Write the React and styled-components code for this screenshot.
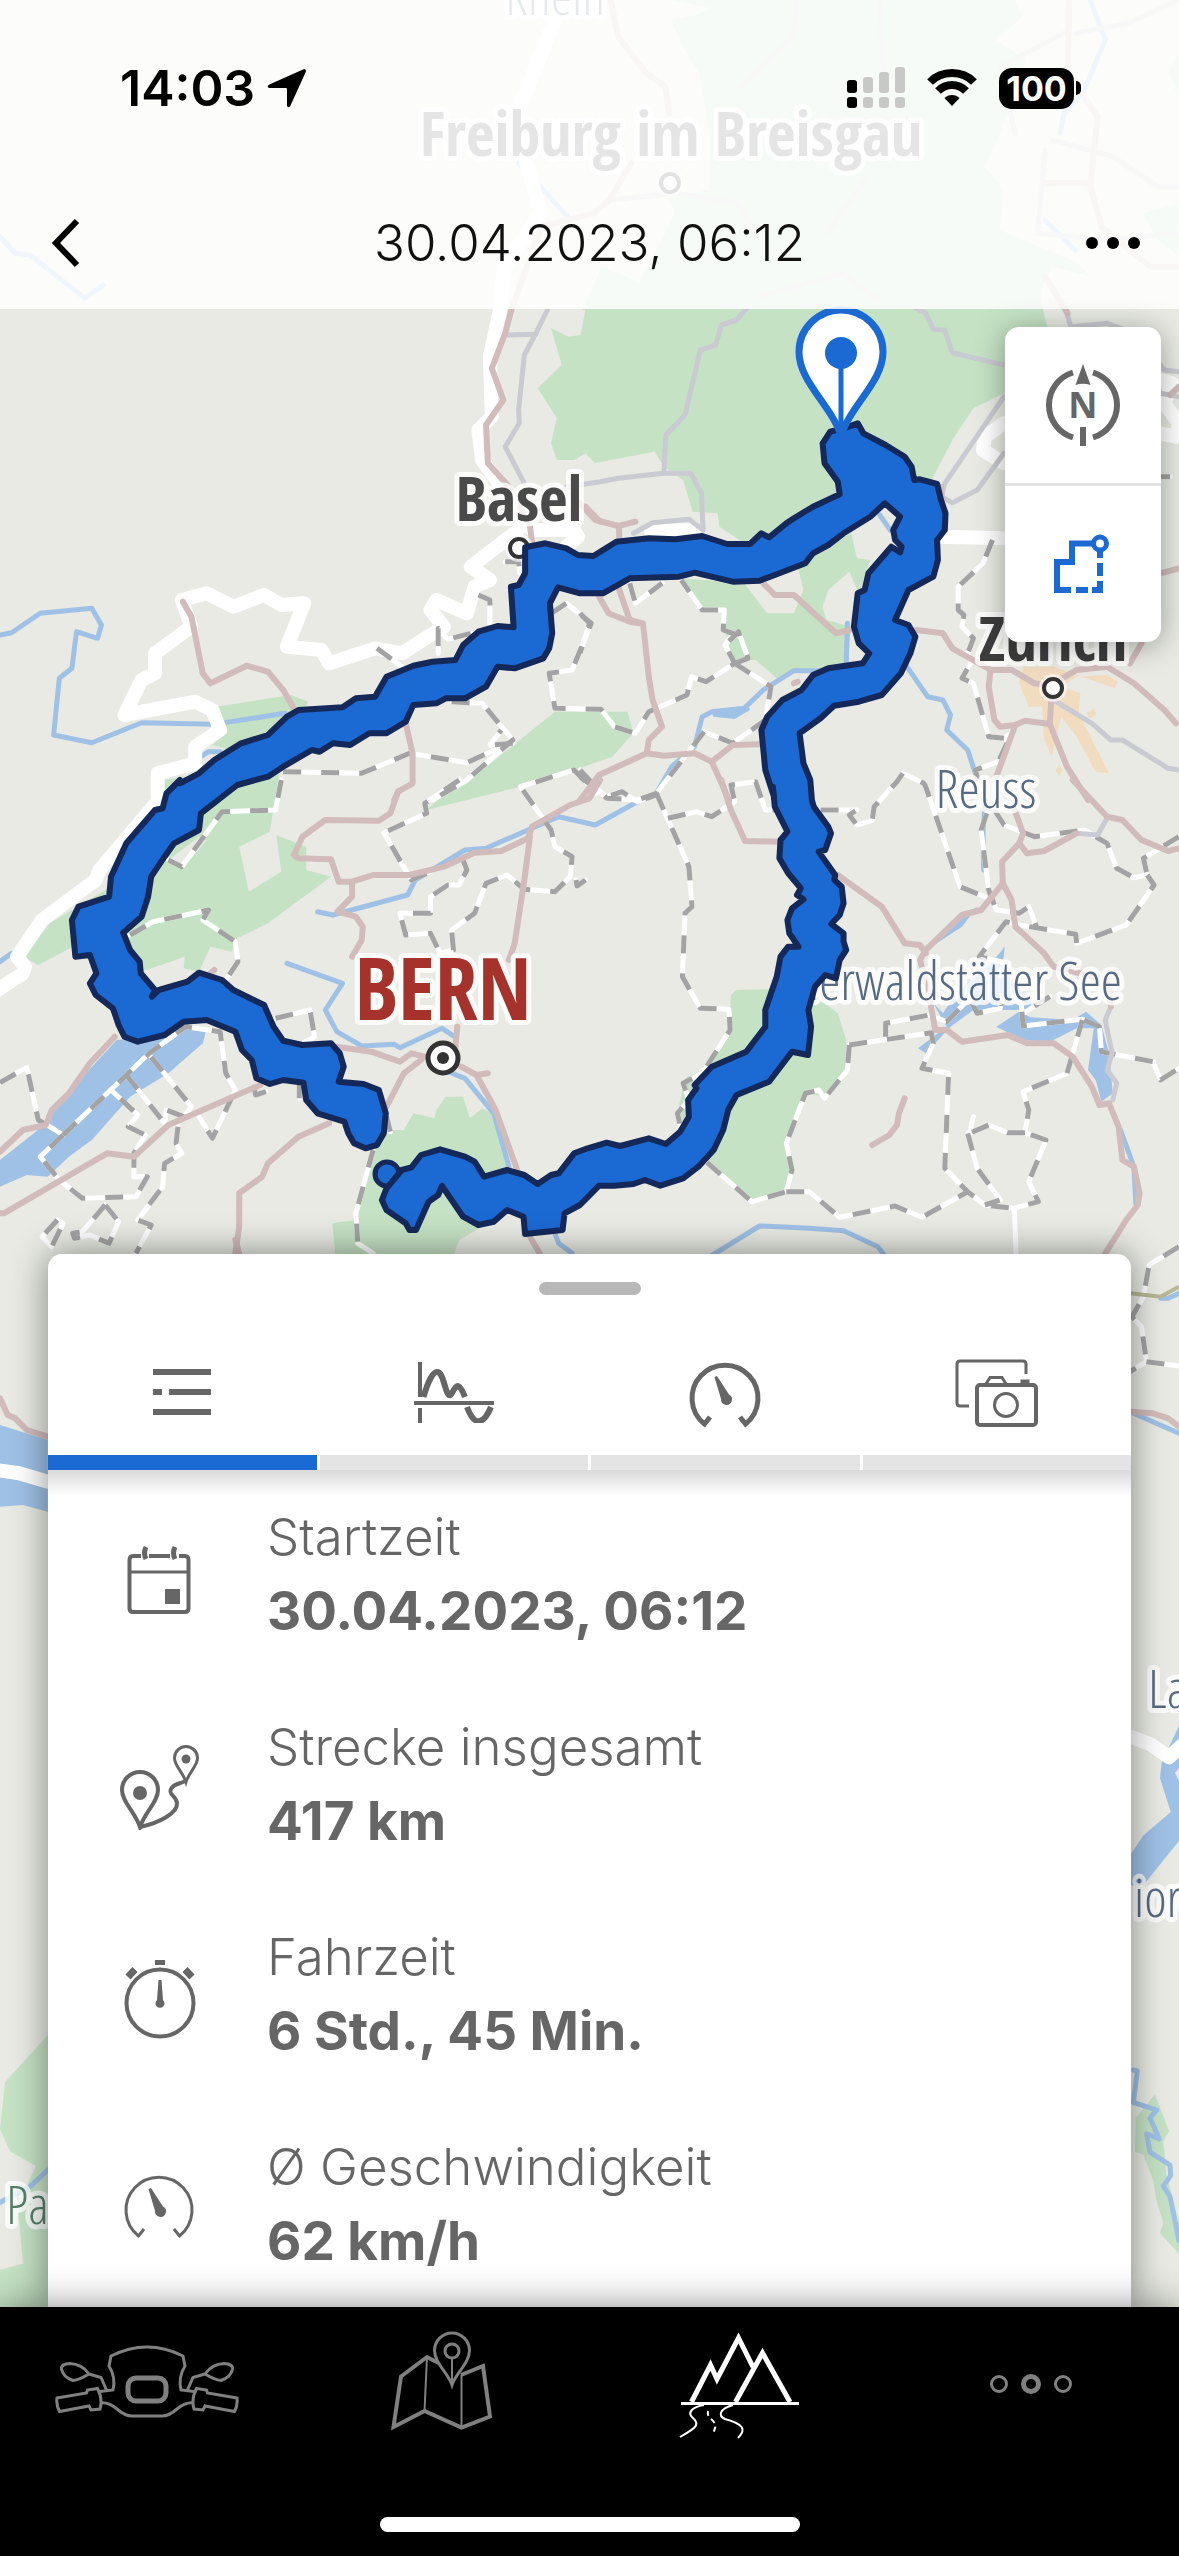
import React from "react";
import styled, { createGlobalStyle } from "styled-components";

const GlobalStyle = createGlobalStyle`
  *, *::before, *::after { box-sizing: border-box; }
  body { margin: 0; background: #e8eae3; font-family: Inter, "Liberation Sans", sans-serif; }
  button { font: inherit; color: inherit; background: none; border: 0; padding: 0; cursor: pointer; }
`;

const blue = "#1b69d3";
const navy = "#14295a";
const grey = "#666666";

/* ---------- map data ---------- */

/* Each sheet of the map has its own origin and its own units per pixel. */
const sheets = {
  A: [0, 0, 1.33, 3],
  B: [0, 300, 2.613, 3],
  C: [580, 300, 2.618, 3],
  D: [0, 780, 2.613, 3],
  E: [580, 780, 2.618, 3],
  F: [0, 1240, 2.613, 3],
  G: [580, 1240, 2.618, 3],
  H: [0, 1680, 1.96, 2.45],
  K: [1000, 1480, 3, 1.912],
};

function project(text) {
  let sheet = sheets.A;
  const out = [];
  text.trim().split(/\s+/).forEach((token) => {
    if (sheets[token]) {
      sheet = sheets[token];
      return;
    }
    const [x, y] = token.split(",").map(Number);
    out.push(
      (sheet[0] + x / sheet[2]).toFixed(1) + "," + (sheet[1] + y / sheet[3]).toFixed(1)
    );
  });
  return out.join(" ");
}

const forests = [
  "A 893,0 945,25 925,45 893,60 905,130 930,220 945,420 943,570 890,590 897,640 880,720 850,845 800,800 775,930 B 1530,30 1517,105 1485,110 1440,85 1468,195 1405,265 1455,355 1440,430 1455,480 1500,480 1530,460 1555,490 C 35,490 195,455 220,500 270,540 295,635 360,640 365,680 430,730 700,640 860,560 920,540 980,410 1030,325 1110,280 1150,200 1240,150 1205,0 A 1385,870 1400,800 1450,830 1435,790 1330,690 1335,570 1310,500 1330,400 1365,180 1325,120 1360,50 1350,0",
  "A 1568,150 1555,220 1568,300",
  "A 1568,610 1520,640 1540,720 1568,770",
  "C 265,835 430,850 490,940 560,940 585,870 570,800 710,700 725,775 760,780 730,880 705,815 650,870 635,920 645,960 710,980 700,1110 580,1110 520,1140 460,1080 400,1080 380,990 375,930 320,930",
  "B 565,1220 760,1185 805,1205 790,1240 600,1350 555,1335 590,1290",
  "D 430,0 735,-60 705,155 625,200 650,335 735,275 722,165 800,200 800,270 865,290 700,430 620,475 605,515 550,500 520,575 480,565 483,530 370,575 300,450 190,500 100,555 60,530 130,430 290,320",
  "B 1450,1235 1640,1235 1655,1300 1600,1370 1500,1410 1360,1460 D 1115,90 B 1200,1440 1250,1420",
  "D 975,1100 1025,1050 1055,1050 1080,1000 1135,1015 1140,990 1165,950 1210,950 1228,1015 1260,985 1285,1000 1325,1160 1260,1340 1200,1380 1180,1440 878,1440 868,1330 930,1320",
  "E 395,645 410,630 490,628 560,640 640,670 675,700 697,780 700,870 640,950 590,940 560,1050 540,1100 555,1170 540,1230 450,1265 330,1145 260,1040 255,1000 275,895 320,870 390,750",
  "H 94,870 10,985 0,1100 20,1155 70,1190 35,1290 45,1430 0,1445 0,1600 94,1600",
  "K 407,1220 465,1175 507,1245 490,1265 500,1330 537,1420 537,1480 480,1440 490,1420 470,1380 460,1340 430,1290 405,1285",
];

const clearings = ["D 440,240 520,170 540,180 480,262"];

const towns = [
  "C 1160,1100 1240,1100 1400,1165 1408,1145 1380,1125 1300,1130 1260,1160 1310,1180 1305,1240 1385,1420 1350,1415 1300,1310 1260,1250 1235,1370 1215,1320 1210,1220 1175,1220 1150,1150",
  "C 1325,1240 1345,1225 1352,1245 1335,1255",
  "C 1245,1410 1255,1395 1262,1410 1255,1430",
];

const lakes = [
  "D 305,780 400,770 500,735 540,745 530,790 440,880 340,950 240,1080 180,1130 125,1190 70,1185 0,1220 0,1140 110,1040 200,910",
  "E 925,670 950,700 985,640 1080,545 1112,500 1105,570 1180,660 1180,690 1030,690 970,740 905,820 885,805 960,740",
  "E 1090,740 1150,695 1180,712 1290,720 1325,695 1365,735 1385,820 1395,940 1365,965 1350,900 1330,870 1345,745 1300,745 1230,785 1160,780",
  "E 1040,380 1000,440 920,500 985,420",
  "C 340,1230 400,1232 440,1215 445,1230 405,1257 350,1250",
  "F 0,555 125,600 125,815 60,795 0,800",
  "K 537,470 485,540 480,570 512,635 430,680 393,715 393,775 430,775 537,690 537,575 525,560 537,550",
];

const rivers = [
  "B 0,1005 30,998 105,940 240,925 265,975 255,1015 200,995 188,1105 155,1135 140,1305 240,1328 370,1268 560,1273 745,1240",
  "B 525,1370 545,1355 575,1355",
  "D 0,545 30,520",
  "D 830,395 870,405 1065,345 1085,300 1215,210 1270,205 1420,130 1460,110 1555,135 E 40,135 150,65 200,40 C 240,1400 300,1340 320,1250 345,1235 430,1225 480,1170 560,1112 640,1112",
  "D 750,550 895,610 850,690 880,755 945,798 1030,793 1045,803 1155,745 1185,768",
  "D 1160,870 1215,895 1290,1000 1330,1160",
  "D 1450,1360 1460,1390 1495,1420",
  "C 700,970 697,1090",
  "C 785,645 812,690",
  "C 850,1090 910,1190 950,1200 970,1245 960,1290 1015,1350 1035,1420",
  "E 1062,60 1055,150 1057,270",
  "E 340,1430 470,1338 600,1345 690,1352 780,1400 800,1430",
  "E 1415,1050 1450,1160 1455,1270",
  "G 1440,515 1568,580",
  "G 1520,175 1540,175 1568,160",
  "K 400,1128 412,1130 400,1190 470,1205 450,1220 478,1260 440,1250 450,1285 510,1310 512,1330 490,1350 510,1370 537,1455",
  "H 0,1280 60,1240 94,1200",
  "A 0,710 20,760 40,765 113,895 137,855",
  "A 690,490 755,650",
  "A 1450,0 1470,120 1440,280 1415,340 1410,400",
  "A 1390,660 1430,750",
];

const motorways = [
  "A 812,0 822,110 860,220 885,260 890,340",
  "A 840,490 810,600 790,640 720,680 680,930 B 1320,100 1285,205 1315,300 1270,375 1275,490 1330,560 1385,680 1390,725",
  "A 1422,0 1420,220 1460,350 1450,560 1465,680 1530,800 1568,800",
  "A 1390,550 1450,548",
  "A 1390,830 1420,940",
  "B 1530,620 1568,665",
  "C 0,610 40,660 100,678 145,665",
  "C 102,678 103,715",
  "C 100,860 130,960 165,970 180,1130 190,1200 215,1280 180,1320 175,1360 50,1425 0,1500",
  "C 50,890 75,940 130,965 155,970",
  "C 175,1360 220,1367 300,1360 345,1385 390,1500",
  "C 345,1385 400,1335 470,1333",
  "E 370,0 395,90 432,183 520,185",
  "C 480,850 510,885 560,885 670,1000 705,990",
  "C 880,990 950,1000 975,1045 1075,1110 1130,1110 1190,1150 1215,1155",
  "C 1075,1110 1070,1160 1085,1260 1100,1280 1140,1275 1165,1262 1230,1272 1235,1180",
  "C 1230,1272 1275,1400 1330,1500",
  "C 1140,1275 1090,1430",
  "E 1135,80 1160,160 1150,190 1105,245 1107,310 1050,390 1000,405 905,510 890,540 910,620 930,750 960,750 1000,785 1120,765 1170,790 1240,790 1290,830 1340,920 1360,975 1385,970 1410,1040 1420,1140 1450,1160 1465,1240 1460,1275 1430,1320 1370,1430",
  "E 1107,310 1130,360 1140,440 1215,520 1240,560 1380,600 1390,680",
  "E 1150,190 1170,220 1215,213 1300,160",
  "E 1290,0 1380,110 1420,120 1470,180 1540,213 1568,205",
  "E 675,285 790,380 850,490 890,495 905,520",
  "E 850,955 835,1000 830,1035 810,1065 765,1095",
  "C 1440,1090 1470,1030",
  "C 1240,1150 1300,1110 1380,1100 1450,1150 1530,1230 1560,1270",
  "C 1520,820 1568,805",
  "C 945,560 948,600",
  "C 560,1150 570,1145",
  "C 1545,285 1568,260",
  "B 478,905 500,950 530,1120 550,1150 645,1097 700,1115 740,1170 770,1230",
  "B 1060,1270 1078,1360 1078,1450 1040,1475 1030,1500",
  "D 1040,35 1020,100 990,122 850,120 790,170 768,225 780,235 865,238 885,305 920,305 975,285 1070,285 1160,260 1240,218 1310,213 1380,175 1390,140 1490,75 1540,55 1568,0",
  "D 920,305 920,350 882,395 930,410 948,440 945,480 920,530",
  "D 1385,170 1370,300 1345,490 1330,540",
  "D 1195,740 1190,800",
  "D 880,800 970,815 1045,845 1075,820 1110,830",
  "D 1100,840 1055,880 1010,980",
  "D 1205,860 1245,885 1295,990 1350,1165 1385,1370 1410,1420",
  "D 1245,885 1275,880",
  "D 300,770 235,850 180,940 135,990 120,1035 60,1050 0,1115",
  "D 680,915 440,1035 350,1130 280,1120 10,1300 0,1300",
  "D 860,1030 780,1070 700,1150 685,1190 625,1240 625,1340 615,1420",
  "D 550,580 560,570",
  "F 615,0 625,40",
  "F 0,475 20,525 40,535 70,570 125,590",
  "G 1440,515 1500,520 1540,535 1568,560",
];

const mainRoads = [
  "B 1430,30 1400,100 1370,165 1355,330 1357,370 1320,440 1370,550",
  "B 1325,105 1400,103",
  "B 1480,560 1568,545 C 100,535 220,520 290,520 318,580 322,690",
  "C 220,510 225,405 275,345 315,150 355,135 370,75 410,60 440,20",
  "C 140,700 190,668 285,658 322,690",
  "C 880,25 905,40 925,88 955,90 975,158 1110,195",
  "C 1110,290 955,550 945,590 975,608 1040,570 1110,460",
  "C 1240,1200 1340,1270 1390,1320 1420,1320 1540,1405 1568,1410",
  "E 1300,160 1355,165 1380,115",
  "E 1390,680 1375,720 1393,820 1380,870 1405,910 1395,960",
  "C 1270,20 1285,80 1380,70 1450,100 1530,210 1568,215",
  "C 1520,280 1568,290",
  "A 1060,0 1055,110 985,260",
  "A 1170,0 1175,220",
  "A 1150,540 1100,700",
  "A 810,600 900,580 980,610 1010,720",
  "A 1010,890 1120,820 1170,900",
  "A 1430,100 1500,70 1568,0",
  "A 1415,100 1330,200 1350,400",
  "A 1400,420 1480,470 1540,560 1568,560",
  "A 1390,450 1380,700 1470,720 1568,700",
];

const countryBorders = [
  "A 738,60 690,330 700,490 720,640 670,800 665,930 B 1280,170 1285,350 1250,390 1260,480 1310,560 1390,680",
  "B 1390,690 1500,690 1510,710 1480,740",
  "B 1355,690 1230,800 1280,840 1240,860 1220,940 1140,900 1125,930 1160,980 1050,1060 980,1045 860,1090 840,1050 750,1040 795,910 735,915 690,885 610,920 540,880 475,900 500,980 405,1060 405,1120 370,1140 325,1245 510,1205 555,1230 575,1290 510,1340 510,1390 412,1420 412,1500 D 415,60 260,270 250,300 110,420 45,530 65,560 60,580 -20,640",
  "C 940,710 1110,715",
  "C 185,693 300,690",
  "C 1110,370 1060,410 1055,450 1110,490",
  "C 1520,240 1550,250 1530,310 1568,370 1560,410 1520,400",
  "F -10,690 50,700 125,725",
  "K 380,488 450,505 507,530 545,508",
];

const cantonBorders = [
  "B 985,1045 1050,1100",
  "B 1250,885 1280,900 1280,970",
  "B 1230,1000 1170,1018 1145,985 1145,1060",
  "B 1320,785 1355,785 1358,820",
  "B 1440,940 1480,910 1545,970 1495,1110 1435,1120 1450,1225 1568,1228 C 55,1228 90,1280 145,1300 180,1235 280,1185 292,1130 330,1145 405,1090 380,1035 400,1000 375,990 378,930 320,930 265,840",
  "C 0,940 25,970 0,1060",
  "C 405,1090 440,1075 415,995 380,1035",
  "C 405,1090 500,1160 485,1260 400,1330 325,1295",
  "C 325,1295 200,1480 150,1500 70,1495 0,1410",
  "C 130,850 145,910 215,850",
  "B 1180,1205 1260,1210 1340,1320 1220,1440 1130,1500",
  "B 1340,1330 1280,1335 1310,1290",
  "B 740,1415 945,1420 1070,1360 1220,1388 1320,1335",
  "D 735,0 720,90 580,95 475,260 440,240",
  "D 340,465 400,425 545,390 530,420 615,485 622,545 590,600",
  "D 1200,0 1110,70 1115,100 1003,158 1075,300 1125,275",
  "D 1210,240 1220,270 1200,315 1170,315 1125,350 1125,400 1045,400 1060,465 1125,460 1150,520 1185,510 1180,450 1240,400 1270,310 1325,285 1370,328 1450,335 1490,290 1495,230 1450,200 1440,150 1360,20 1500,-30 1560,40",
  "D 1505,300 1508,318 1530,300",
  "E 0,-10 70,50 110,35 150,65 200,45",
  "E 200,40 285,260 293,380 275,400 268,590 315,685 390,688 393,750 320,880 270,910 285,960 255,1000 265,1050",
  "E 230,115 305,95 345,110 405,65 395,15 460,5 485,90 530,90",
  "E 630,90 725,90 705,105 725,135 765,122 770,80 830,5 C 845,1420 900,1450 E 905,20 995,320 1060,350",
  "E 1085,90 1110,135 1190,170 1320,150 1380,190 1405,265 1450,293 1485,285 1475,235 1568,170",
  "E 1485,285 1503,315 1430,435 1300,490 1298,463 1150,435 1115,425 1045,530 1120,550",
  "E 1065,100 1050,150 1070,330 1090,390 1150,400 1175,380 1195,440",
  "E 705,795 920,758 925,790 895,865 965,880 955,1165 1015,1235 1060,1275 1135,1285 1200,1265 1175,1205 1220,1080 1165,1058 1175,990 1160,935 1275,880 1315,720",
  "E 1165,1058 1120,1058 1070,1035 1020,1060 1030,1010",
  "E 1015,1060 1040,1165 1100,1260 1060,1275",
  "E 705,795 700,870 640,955 625,930 590,940 540,1090 555,1170 540,1235 450,1265 330,1145",
  "E 540,1235 600,1235 680,1312 825,1278 895,1312 1015,1235",
  "E 800,770 800,730 915,705 960,725 1020,655 1040,700 1100,685 1105,650 1155,670 1160,738 1315,718 1360,740 1365,815 1500,845 1520,900 1568,865",
  "E 1230,650 1160,700",
  "C 1080,720 1055,790 990,860 990,930 1005,945 1000,980 1030,1015 1015,1060 1025,1085 1000,1135 1030,1150 1070,1310 1110,1315 1130,1300 1095,1385 1035,1410 1045,1450",
  "C 1520,530 1545,530",
  "D 0,908 70,862 100,1020 130,1040 165,1065 390,820 485,740 575,755 590,880 615,930 555,1075 520,1010",
  "D 165,1065 105,1130 155,1200 215,1255 355,1250 385,1190 350,1190 350,1120 380,1065 335,1040 360,1005 290,930",
  "D 330,885 430,1030 435,990 480,1010 500,980 390,825",
  "D 465,1040 460,1090 475,1120 430,1150 425,1220 360,1320 395,1335 355,1420",
  "D 275,1275 310,1325 285,1390 235,1365 195,1375 190,1360 215,1355 275,1275",
  "D 150,1320 110,1370 135,1400 165,1330 150,1320",
  "D 720,715 810,690 822,770 790,790",
  "D 665,930 668,945 695,935",
  "D 782,915 782,955",
  "D 1010,1010 1020,1055",
  "D 975,1110 930,1300 935,1390 975,1420",
  "G 1568,20 1490,75 1475,170 1455,210 1445,230 1470,260 1483,365 1440,395",
  "G 1483,365 1568,378",
];

const track =
  "C 727,370 742,400 800,435 850,470 868,500 875,540 890,538 935,552 945,600 957,640 955,690 935,720 937,780 925,830 860,870 825,960 860,975 878,1010 865,1060 840,1120 790,1185 730,1205 665,1217 630,1255 575,1300 585,1390 603,1440 607,1500 " +
  "E 612,80 650,140 657,160 642,210 625,215 668,285 666,300 685,320 690,370 680,405 658,432 690,460 690,485 697,510 680,540 670,595 642,585 615,620 598,690 605,740 597,825 555,815 495,905 410,945 388,990 375,1050 350,1110 310,1160 270,1195 210,1217 170,1200 140,1212 90,1217 50,1217 0,1275 " +
  "D 1475,1300 1470,1350 1372,1362 1368,1310 1325,1290 1290,1325 1250,1335 1210,1310 1155,1218 1145,1245 1120,1265 1087,1350 1070,1350 1060,1330 1010,1290 998,1260 1010,1225 1050,1170 1075,1162 1100,1125 1150,1108 1215,1130 1240,1145 1265,1190 1325,1170 1370,1185 1405,1212 1440,1185 1460,1180 1500,1120 " +
  "E 20,1105 70,1088 105,1098 180,1075 225,1092 262,1055 285,1010 283,960 305,925 300,915 345,860 435,815 485,740 485,690 500,640 515,590 525,530 545,500 572,500 548,460 543,420 555,385 585,358 568,345 578,325 545,280 522,235 525,180 543,155 510,80 505,20 " +
  "C 508,1490 485,1410 475,1290 490,1250 530,1200 580,1170 610,1125 650,1105 740,1090 757,1060 730,1030 717,980 727,880 745,870 755,820 815,740 838,757 842,740 825,720 820,690 838,650 798,610 760,650 690,700 650,735 610,760 590,790 510,825 470,842 400,845 300,818 260,830 130,835 60,880 0,880 " +
  "B 1458,862 1437,910 1443,1000 1435,1045 1420,1075 1345,1105 1300,1100 1270,1160 1215,1195 1165,1195 1140,1210 1080,1215 1060,1265 1010,1300 965,1300 915,1335 870,1330 835,1355 815,1350 740,1400 700,1430 620,1455 570,1500 " +
  "D 525,100 520,150 455,190 430,230 395,290 387,350 370,410 322,458 340,510 365,545 368,580 405,630 397,650 415,630 490,605 520,578 580,600 610,630 690,675 715,740 740,782 790,795 865,790 888,820 898,860 885,905 950,912 990,930 1008,1000 1003,1060 985,1095 955,1105 925,1090 910,1060 900,1025 830,1000 800,960 793,908 740,900 705,912 670,895 658,840 632,810 615,755 540,720 480,725 430,765 360,785 325,770 310,735 295,685 250,645 235,610 252,580 235,525 197,530 188,420 205,380 285,350 290,290 330,190 405,90 425,85 435,40 470,0 " +
  "B 470,1450 520,1420 560,1380 630,1330 700,1305 750,1250 780,1230 895,1222 930,1195 980,1190 1010,1130 1080,1097 1130,1085 1190,1080 1210,1035 1250,995 1300,978 1342,982 1335,860 1355,855 1372,820 1372,742 1425,730 1480,745 1510,765 1550,768 " +
  "C 35,768 95,725 180,715 250,718 320,708 385,732 445,732 475,700 495,712 540,670 560,655 610,620 680,583 675,545 640,490 635,430 655,395 690,385";

const MapSvg = styled.svg`
  position: absolute;
  inset: 0;
  width: 100%;
  height: 100%;
  z-index: 0;
`;

const Label = styled.text`
  font-family: ${(p) => (p.$bold ? '"Open Sans Condensed", ' : '"Open Sans Condensed Light", "Noto Sans Condensed", ')} "Open Sans", sans-serif;
  font-size: ${(p) => p.$size}px;
  font-weight: ${(p) => (p.$bold ? 700 : 400)};
  fill: ${(p) => p.$color};
  stroke: rgba(255, 255, 255, 0.8);
  stroke-width: 10px;
  stroke-linejoin: round;
  paint-order: stroke;
`;

function Lines({ items, color, width, dash }) {
  return (
    <g fill="none" stroke={color} strokeWidth={width} strokeDasharray={dash} strokeLinejoin="round" strokeLinecap={dash ? "butt" : "round"}>
      {items.map((line) => (
        <polyline key={line} points={project(line)} />
      ))}
    </g>
  );
}

function Areas({ items, color }) {
  return (
    <g fill={color}>
      {items.map((area) => (
        <polygon key={area} points={project(area)} />
      ))}
    </g>
  );
}

function Town({ x, y }) {
  return (
    <g>
      <circle cx={x} cy={y} r="14" fill="#fff" opacity="0.6" />
      <circle cx={x} cy={y} r="9" fill="#fff" stroke="#333" strokeWidth="4" />
    </g>
  );
}

function TripMap() {
  return (
    <MapSvg viewBox="0 0 1179 2556" preserveAspectRatio="xMidYMin slice" role="img" aria-label="Karte">
      <rect width="1179" height="2556" fill="#e8eae3" />
      <Areas items={forests} color="#c5e2c5" />
      <Areas items={clearings} color="#e8eae3" />
      <Areas items={towns} color="#f1dcc0" />
      <Areas items={lakes} color="#9fc1e6" />
      <Lines items={rivers} color="#9fc1e6" width="5" />
      <Lines items={countryBorders} color="#ffffff" width="14" />
      <polyline points={project("E 1137,1285 1142,1430")} fill="none" stroke="#fff" strokeWidth="5" />
      <Lines items={cantonBorders} color="#ffffff" width="5" />
      <Lines items={cantonBorders} color="#a3a3a3" width="5" dash="18 20" />
      <Lines items={mainRoads} color="#cacad2" width="5" />
      <Lines items={motorways} color="#d2bbbb" width="6" />
      <polyline points={project("G 1440,160 1520,170 1568,140")} fill="none" stroke="#b8b896" strokeWidth="4" />

      <Label x="555" y="15" textAnchor="middle" $size={54} $color="#566a83">Rhein</Label>
      <Label x="671" y="156" textAnchor="middle" $size={62} $bold $color="#4a4a4a">Freiburg im Breisgau</Label>
      <Town x={670} y={183} />
      <Label x="519" y="521" textAnchor="middle" $size={62} $bold $color="#4a4a4a">Basel</Label>
      <Town x={519} y={548} />
      <Label x="1053" y="661" textAnchor="middle" $size={62} $bold $color="#3d3d3d">Zürich</Label>
      <Town x={1053} y={688} />
      <Label x="986" y="808" textAnchor="middle" $size={54} $color="#566a83">Reuss</Label>
      <Label x="1122" y="1000" textAnchor="end" $size={54} $color="#566a83">Vierwaldstätter See</Label>
      <Label x="443" y="1020" textAnchor="middle" $size={86} $bold $color="#a6332b">BERN</Label>
      <circle cx="443" cy="1058" r="15" fill="#fff" stroke="#333" strokeWidth="5" />
      <circle cx="443" cy="1058" r="6" fill="#333" />
      <Label x="1148" y="1708" $size={54} $color="#566a83">Lago</Label>
      <Label x="1134" y="1917" $size={54} $color="#566a83">iore</Label>
      <Label x="6" y="2224" $size={54} $color="#56806a">Pa</Label>

      <circle cx={387} cy={1174} r="12" fill={blue} stroke={navy} strokeWidth="5" />
      <polygon points={project(track)} fill={blue} stroke={navy} strokeWidth="6" strokeLinejoin="round" />

      <path d="M841 434C828 400 799 384 799 352A42 42 0 0 1 883 352C883 384 854 400 841 434Z" fill="#fff" />
      <path d="M841 436C832 406 799 382 799 352A42 42 0 0 1 883 352C883 382 850 406 841 436Z" fill="#fff" stroke={blue} strokeWidth="7" />
      <circle cx="841" cy="353" r="16" fill={blue} />
      <path d="M841 353V436" stroke={blue} strokeWidth="5" />
    </MapSvg>
  );
}

/* ---------- page frame ---------- */

const Screen = styled.div`
  position: relative;
  display: flex;
  flex-direction: column;
  min-height: 100vh;
  overflow: hidden;
`;

const Header = styled.header`
  position: relative;
  z-index: 1;
  background: rgba(255, 255, 255, 0.86);
  color: #000;
`;

const StatusBar = styled.div`
  display: flex;
  justify-content: space-between;
  align-items: center;
  height: 132px;
  padding: 44px 98px 0 120px;
`;

const StatusGroup = styled.div`
  display: flex;
  align-items: center;
  gap: ${(p) => p.$gap}px;
`;

const Clock = styled.time`
  font-size: 50px;
  line-height: 60px;
  font-weight: 600;
`;

const Battery = styled.span`
  display: flex;
  align-items: center;
  gap: 2px;

  &::after {
    content: "";
    width: 5px;
    height: 14px;
    border-radius: 0 5px 5px 0;
    background: #000;
  }
`;

const BatteryLevel = styled.span`
  width: 75px;
  height: 41px;
  border-radius: 13px;
  background: #000;
  color: #fff;
  font-size: 34px;
  line-height: 41px;
  font-weight: 700;
  text-align: center;
`;

const TitleBar = styled.div`
  display: grid;
  grid-template-columns: 132px 1fr 132px;
  align-items: center;
  height: 177px;
  padding-top: 45px;
`;

const Title = styled.h1`
  margin: 0;
  font-size: 51px;
  line-height: 66px;
  font-weight: 300;
  text-align: center;
  color: #111;
`;

const BarButton = styled.button`
  display: flex;
  align-items: center;
  justify-content: center;
  height: 132px;
`;

const Main = styled.main`
  position: relative;
  z-index: 1;
  flex: 1;
  display: flex;
  flex-direction: column;
`;

const MapTools = styled.div`
  display: flex;
  flex-direction: column;
  align-self: flex-end;
  margin: 18px;
  border-radius: 14px;
  background: #fff;
  box-shadow: 0 4px 30px rgba(0, 0, 0, 0.35);
`;

const ToolButton = styled.button`
  display: flex;
  align-items: center;
  justify-content: center;
  width: 156px;
  height: 156px;

  & + & {
    height: 159px;
    border-top: 3px solid #e3e3e3;
  }
`;

const Sheet = styled.section`
  margin: auto 48px 0;
  border-radius: 14px 14px 0 0;
  background: #fff;
  box-shadow: 0 0 36px rgba(0, 0, 0, 0.45);
`;

const HandleArea = styled.div`
  display: flex;
  justify-content: center;
  height: 74px;
  padding-top: 28px;
`;

const Handle = styled.button`
  width: 102px;
  height: 13px;
  border-radius: 7px;
  background: #b8b8b8;
`;

const Tabs = styled.div`
  display: grid;
  grid-template-columns: repeat(4, 1fr);
  column-gap: 3px;
`;

const Tab = styled.button`
  display: flex;
  align-items: center;
  justify-content: center;
  height: 142px;
  border-bottom: 15px solid ${(p) => (p.$active ? blue : "#e4e4e4")};
`;

const Facts = styled.dl`
  display: flex;
  flex-direction: column;
  gap: 60px;
  margin: 0;
  padding: 29px 69px 28px;
  color: ${grey};
  background: linear-gradient(#dadada, #ffffff 26px);
`;

const Fact = styled.div`
  display: grid;
  grid-template-columns: 84px 1fr;
  column-gap: 66px;
  align-items: center;
`;

const FactText = styled.div`
  line-height: 75px;
`;

const FactName = styled.dt`
  font-size: 51px;
  font-weight: 300;
`;

const FactValue = styled.dd`
  margin: 0;
  font-size: 53px;
  font-weight: 700;
`;

const BottomNav = styled.nav`
  position: relative;
  z-index: 2;
  display: flex;
  flex-direction: column;
  justify-content: space-between;
  align-items: center;
  height: 249px;
  padding: 22px 0 24px;
  background: #000;
  box-shadow: 0 0 36px rgba(0, 0, 0, 0.45);
`;

const NavLinks = styled.div`
  display: grid;
  grid-template-columns: repeat(4, 1fr);
  width: 100%;
`;

const NavLink = styled.a`
  display: flex;
  justify-content: center;
  color: ${(p) => (p.$active ? "#ffffff" : "#808080")};
`;

const HomeIndicator = styled.div`
  width: 420px;
  height: 15px;
  border-radius: 8px;
  background: #fff;
`;

/* ---------- icons ---------- */

const LocationIcon = () => (
  <svg width="40" height="40" viewBox="0 0 40 40" aria-hidden="true">
    <path d="M36 1.5C38.5.6 39.6 1.8 38.6 4.2L23.5 37.6C22.4 40 20 39.6 20 37V21.2C20 20.4 19.6 20 18.8 20H3C.4 20-.2 17.6 2.4 16.5Z" fill="currentColor" />
  </svg>
);

const SignalIcon = () => (
  <svg width="58" height="42" viewBox="0 0 58 42" aria-hidden="true">
    <g fill="#c8c8c8">
      <rect x="16" y="10" width="10" height="16" rx="3" />
      <rect x="32" y="5" width="10" height="21" rx="3" />
      <rect x="48" y="0" width="10" height="26" rx="3" />
      <rect x="16" y="30" width="10" height="11" rx="3" />
      <rect x="32" y="30" width="10" height="11" rx="3" />
      <rect x="48" y="30" width="10" height="11" rx="3" />
    </g>
    <rect x="0" y="13" width="10" height="13" rx="3" />
    <rect x="0" y="30" width="10" height="11" rx="3" />
  </svg>
);

const WifiIcon = () => (
  <svg width="50" height="38" viewBox="0 0 50 38" aria-hidden="true">
    <path d="M3 13C15 1 35 1 47 13" fill="none" stroke="#000" strokeWidth="8" />
    <path d="M11 22C19 14 31 14 39 22" fill="none" stroke="#000" strokeWidth="8" />
    <path d="M25 37L17.5 29C21.500 25 28.500 25 32.500 29Z" />
  </svg>
);

const BackIcon = () => (
  <svg width="28" height="50" viewBox="0 0 28 50" aria-hidden="true">
    <path d="M25 3L4 25L25 47" fill="none" stroke="#000" strokeWidth="6" />
  </svg>
);

const MoreIcon = () => (
  <svg width="56" height="14" viewBox="0 0 56 14" aria-hidden="true">
    <circle cx="7" cy="7" r="6" />
    <circle cx="28" cy="7" r="6" />
    <circle cx="49" cy="7" r="6" />
  </svg>
);

const CompassLetter = styled.text`
  font-family: "Open Sans", sans-serif;
  font-size: 36px;
  font-weight: 700;
  text-anchor: middle;
`;

const CompassIcon = () => (
  <svg width="84" height="84" viewBox="0 0 84 84" fill={grey} aria-hidden="true">
    <path d="M32 9.500A34 34 0 0 0 32 74.500M52 9.500A34 34 0 0 1 52 74.500" fill="none" stroke={grey} strokeWidth="6" />
    <path d="M42 1L49.500 22Q42 19.500 34.500 22Z" />
    <rect x="39" y="64" width="6" height="19" />
    <CompassLetter x="42" y="55">N</CompassLetter>
  </svg>
);

const TrackIcon = () => (
  <svg width="84" height="84" viewBox="0 0 84 84" fill="none" stroke={blue} strokeWidth="6" aria-hidden="true">
    <path d="M52 21.500H31V40H16V68H30M35 68H47M51 68H59V59M59 54V41M59 36V29" />
    <circle cx="59" cy="21.500" r="6.500" strokeWidth="5" />
  </svg>
);

const ListIcon = () => (
  <svg width="58" height="46" viewBox="0 0 58 46" fill={grey} aria-hidden="true">
    <rect width="58" height="6" />
    <rect y="20" width="9" height="6" />
    <rect x="16" y="20" width="42" height="6" />
    <rect y="40" width="58" height="6" />
  </svg>
);

const ChartIcon = () => (
  <svg width="80" height="62" viewBox="0 0 80 62" fill="none" stroke={grey} strokeWidth="4" aria-hidden="true">
    <path d="M6 1V36M6 47V62M0 42H80" />
    <path d="M9.500 36C14 20 19 11 23 11C29 11 30 26 34 33Q36 36 38 32Q42 24 44 25Q47 26 51 36M53 46C60 65 69 65 77 46" strokeWidth="6" />
  </svg>
);

const GaugeIcon = ({ size, stroke }) => (
  <svg width={size} height={size} viewBox="0 0 84 84" fill="none" stroke={grey} strokeWidth={stroke} aria-hidden="true">
    <path d="M27 67L21.500 74A33 33 0 1 1 62.500 74L57 67" />
    <path d="M31.500 27L34 26L46 44.500A5.500 5.500 0 1 1 38 49Z" fill={grey} stroke="none" />
  </svg>
);

const CameraIcon = () => (
  <svg width="84" height="76" viewBox="0 0 84 76" fill="none" stroke={grey} strokeWidth="3" aria-hidden="true">
    <path d="M14 52H5Q2 52 2 49V10Q2 7 5 7H68Q71 7 71 10V20" />
    <rect x="22" y="31" width="59" height="40" rx="3" strokeWidth="4" />
    <path d="M31 30L35 23.500H47L51 30" />
    <rect x="66" y="26" width="8" height="4" fill={grey} strokeWidth="1" />
    <circle cx="51" cy="51" r="11.500" />
  </svg>
);

const CalendarIcon = () => (
  <svg width="84" height="84" viewBox="0 0 84 84" fill="none" stroke={grey} strokeWidth="4" aria-hidden="true">
    <path d="M24 24H16Q12.500 24 12.500 28V76Q12.500 80 16 80H68Q71.500 80 71.500 76V28Q71.500 24 68 24H62M32 24H53" />
    <path d="M13 40H71" strokeWidth="3" />
    <path d="M29 15Q26 21 29 27M58 15Q55 21 58 27" strokeWidth="5" />
    <rect x="48" y="57" width="15" height="15" fill={grey} stroke="none" />
  </svg>
);

const RouteIcon = () => (
  <svg width="84" height="92" viewBox="0 0 84 92" fill="none" stroke={grey} strokeWidth="4" aria-hidden="true">
    <path d="M23 89C18 74 5 64 5 52A18 18 0 0 1 41 52C41 64 28 74 23 89Z" />
    <circle cx="23" cy="55" r="7" fill={grey} stroke="none" />
    <path d="M69 44C66 34 57.500 28 57.500 20A11.500 11.500 0 0 1 80.500 20C80.500 28 72 34 69 44Z" strokeWidth="3" />
    <circle cx="69" cy="21" r="4.500" fill={grey} stroke="none" />
    <path d="M23 89C42 85 61 75 60 65C59 57 51 57 54 51C57 45 64 46 68 43" />
  </svg>
);

const StopwatchIcon = () => (
  <svg width="84" height="92" viewBox="0 0 84 92" fill="none" stroke={grey} strokeWidth="4" aria-hidden="true">
    <circle cx="43" cy="55" r="33.500" />
    <rect x="38" y="12" width="10" height="5" fill={grey} stroke="none" />
    <path d="M11 29L18 21.500M68 21.500L75 29" strokeWidth="7" />
    <path d="M41.500 32H44.500L46 52A4.500 4.500 0 1 1 40 52Z" fill={grey} stroke="none" />
  </svg>
);

const ScooterHalf = () => (
  <g>
    <path d="M2 69L31.500 64L32.500 61L42.500 59.500Q48 70 45 80L36 81L34 77L4.500 82.500Q1 76 2 69Z" />
    <path d="M34 45Q27 35 15 34.500Q6 35 6.500 40Q8 48 18 51.500Q24 51 34 45ZM34 45L46 48.500L51.500 61" />
  </g>
);

const ScooterIcon = () => (
  <svg width="184" height="112" viewBox="0 0 184 112" fill="none" stroke="currentColor" strokeWidth="3" aria-hidden="true">
    <ScooterHalf />
    <g transform="translate(184 0) scale(-1 1)">
      <ScooterHalf />
    </g>
    <path d="M45 62.500L58 61Q61 48 54 37L56 27Q92 9 128 27L130 37Q123 48 126 61L139 62.500" />
    <path d="M46 74Q53 73 62 80Q70 87 77 87H107Q114 87 122 80Q131 73 138 74" />
    <rect x="73" y="49" width="38" height="23" rx="8" strokeWidth="5" />
  </svg>
);

const MapIcon = () => (
  <svg width="184" height="112" viewBox="0 0 184 112" fill="none" stroke="currentColor" strokeWidth="4" aria-hidden="true">
    <path d="M88.500 34L77 28L51 47.500L43.500 98L74.500 82L111.500 98.500L140 87.500L133 37L111 46" />
    <path d="M77 28L74.500 82M111.500 46V98" strokeWidth="2" />
    <path d="M102 56C98 44 84.500 34 84.500 21.500A17.500 17.500 0 0 1 119.500 21.500C119.500 34 106 44 102 56Z" strokeWidth="3" />
    <circle cx="102" cy="22" r="7" strokeWidth="3" />
    <path d="M102 29V54" strokeWidth="2" />
  </svg>
);

const MountainIcon = () => (
  <svg width="184" height="112" viewBox="0 0 184 112" fill="none" stroke="currentColor" strokeWidth="5" strokeMiterlimit="10" aria-hidden="true">
    <path d="M46.500 73L65.500 36L72 50L93.500 9L108 38M90.500 73L117.500 24L145 73" />
    <path d="M36 74.500H154" strokeWidth="3" />
    <path d="M59 76C46 78 43 84 47 88C55 95 53 98 35 108M88 76C74 80 73 87 80 90C98 95 102 100 93 109" strokeWidth="2" />
    <path d="M63 82Q62 87 66 90Q72 95 70 99Q69 103 67 106" strokeWidth="2" strokeDasharray="5 4" />
  </svg>
);

const DotsIcon = () => (
  <svg width="184" height="112" viewBox="0 0 184 112" fill="none" stroke="currentColor" strokeWidth="3" aria-hidden="true">
    <circle cx="59" cy="55" r="7.500" />
    <circle cx="91" cy="55" r="7.500" strokeWidth="5" />
    <circle cx="123" cy="55" r="7.500" />
  </svg>
);

/* ---------- content ---------- */

const tabs = [
  { name: "Übersicht", icon: <ListIcon /> },
  { name: "Höhenprofil", icon: <ChartIcon /> },
  { name: "Geschwindigkeit", icon: <GaugeIcon size={84} stroke={5} /> },
  { name: "Fotos", icon: <CameraIcon /> },
];

const facts = [
  { name: "Startzeit", value: "30.04.2023, 06:12", icon: <CalendarIcon /> },
  { name: "Strecke insgesamt", value: "417 km", icon: <RouteIcon /> },
  { name: "Fahrzeit", value: "6 Std., 45 Min.", icon: <StopwatchIcon /> },
  { name: "Ø Geschwindigkeit", value: "62 km/h", icon: <GaugeIcon size={84} stroke={3} /> },
];

const links = [
  { name: "Fahrzeug", href: "#fahrzeug", icon: <ScooterIcon /> },
  { name: "Karte", href: "#karte", icon: <MapIcon /> },
  { name: "Fahrten", href: "#fahrten", icon: <MountainIcon /> },
  { name: "Mehr", href: "#mehr", icon: <DotsIcon /> },
];

export default function App() {
  return (
    <Screen>
      <GlobalStyle />
      <TripMap />
      <Header>
        <StatusBar>
          <StatusGroup $gap={12}>
            <Clock>14:03</Clock>
            <LocationIcon />
          </StatusGroup>
          <StatusGroup $gap={22}>
            <SignalIcon />
            <WifiIcon />
            <Battery>
              <BatteryLevel>100</BatteryLevel>
            </Battery>
          </StatusGroup>
        </StatusBar>
        <TitleBar>
          <BarButton aria-label="Zurück">
            <BackIcon />
          </BarButton>
          <Title>30.04.2023, 06:12</Title>
          <BarButton aria-label="Mehr">
            <MoreIcon />
          </BarButton>
        </TitleBar>
      </Header>
      <Main>
        <MapTools>
          <ToolButton aria-label="Norden">
            <CompassIcon />
          </ToolButton>
          <ToolButton aria-label="Route anzeigen">
            <TrackIcon />
          </ToolButton>
        </MapTools>
        <Sheet>
          <HandleArea>
            <Handle aria-label="Details verschieben" />
          </HandleArea>
          <Tabs role="tablist">
            {tabs.map((tab, index) => (
              <Tab key={tab.name} role="tab" aria-label={tab.name} aria-selected={index === 0} $active={index === 0}>
                {tab.icon}
              </Tab>
            ))}
          </Tabs>
          <Facts>
            {facts.map((fact) => (
              <Fact key={fact.name}>
                {fact.icon}
                <FactText>
                  <FactName>{fact.name}</FactName>
                  <FactValue>{fact.value}</FactValue>
                </FactText>
              </Fact>
            ))}
          </Facts>
        </Sheet>
      </Main>
      <BottomNav>
        <NavLinks>
          {links.map((link) => (
            <NavLink key={link.name} href={link.href} aria-label={link.name} $active={link.name === "Fahrten"}>
              {link.icon}
            </NavLink>
          ))}
        </NavLinks>
        <HomeIndicator />
      </BottomNav>
    </Screen>
  );
}
